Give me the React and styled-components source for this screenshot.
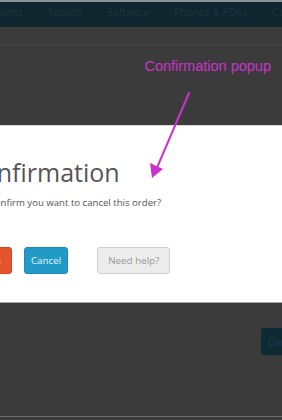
import React from "react";
import styled, { createGlobalStyle } from "styled-components";

const Global = createGlobalStyle`
  html, body { margin: 0; padding: 0; background: #3b3b3b; }
  body { font-family: "Open Sans", "Liberation Sans", sans-serif; overflow: hidden; }
`;

const Screen = styled.div`
  position: relative;
  width: 282px;
  height: 420px;
  overflow: hidden;
  background: #3b3b3b;
  display: flex;
  flex-direction: column;
`;

const TopRule = styled.div`
  height: 2px;
  background: #8c9397;
  flex: none;
`;

const NavBar = styled.nav`
  flex: none;
  height: 25px;
  box-sizing: border-box;
  padding-top: 3px;
  background: #10262f;
  display: flex;
  align-items: flex-start;
  gap: 25px;
  margin-left: -38px;
  white-space: nowrap;
`;

const NavItem = styled.span`
  font-size: 10px;
  line-height: 14px;
  color: #1c3540;
  letter-spacing: 0.1px;
`;

const Backdrop = styled.div`
  flex: none;
  height: ${(p) => p.$h}px;
  border-top: ${(p) => (p.$rule ? "1px solid #434343" : "none")};
  display: flex;
  flex-direction: column;
  align-items: ${(p) => p.$align || "stretch"};
`;

const Annotation = styled.div`
  font-family: "Liberation Sans", Arial, sans-serif;
  font-size: 14.5px;
  color: #cc33cc;
  padding: 13px 11px 0 0;
  line-height: 16px;
`;

const Modal = styled.section`
  flex: none;
  height: 176px;
  background: #ffffff;
  border-top: 1px solid #d9d9d9;
  border-bottom: 1px solid #a9a9a9;
  overflow: hidden;
`;

const ModalContent = styled.div`
  margin-left: -34px;
  padding-top: 30px;
  display: flex;
  flex-direction: column;
`;

const Title = styled.h1`
  margin: 0;
  font-weight: 400;
  font-size: 25px;
  line-height: 32px;
  color: #555555;
  white-space: nowrap;
`;

const Message = styled.p`
  margin: 8px 0 0 -10px;
  font-size: 9.6px;
  line-height: 14px;
  color: #555555;
  white-space: nowrap;
`;

const ButtonRow = styled.div`
  display: flex;
  align-items: center;
  margin-top: 37px;
  margin-left: -13px;
`;

const Button = styled.button`
  font-family: "Open Sans", "Liberation Sans", sans-serif;
  font-size: 9.8px;
  height: 27px;
  padding: 0 ${(p) => p.$pad || 6}px;
  border-radius: 3px;
  border: 1px solid ${(p) => p.$border};
  background: ${(p) => p.$bg};
  color: ${(p) => p.$fg};
  margin-left: ${(p) => p.$gap || 0}px;
  white-space: nowrap;
`;

const LowerBackdrop = styled.div`
  flex: 1;
  display: flex;
  flex-direction: column;
  align-items: flex-end;
  padding-top: 25px;
`;

const GhostButton = styled.div`
  width: 40px;
  height: 27px;
  margin-right: -19px;
  border-radius: 3px;
  background: #0f2a35;
  color: #1f3d49;
  font-size: 10px;
  display: flex;
  align-items: center;
  padding-left: 7px;
  box-sizing: border-box;
`;

const BottomRule = styled.div`
  height: 1px;
  background: #6c6c6c;
  margin-bottom: 3px;
  flex: none;
`;

const ArrowLayer = styled.svg`
  position: absolute;
  left: 0;
  top: 0;
  pointer-events: none;
`;

export default function App() {
  return (
    <>
      <Global />
      <Screen>
        <TopRule />
        <NavBar>
          <NavItem>Components</NavItem>
          <NavItem>Tablets</NavItem>
          <NavItem>Software</NavItem>
          <NavItem>Phones &amp; PDAs</NavItem>
          <NavItem>Cameras</NavItem>
        </NavBar>
        <Backdrop $h={17} />
        <Backdrop $h={80} $rule $align="flex-end">
          <Annotation>Confirmation popup</Annotation>
        </Backdrop>
        <Modal>
          <ModalContent>
            <Title>Confirmation</Title>
            <Message>Do you confirm you want to cancel this order?</Message>
            <ButtonRow>
              <Button $bg="#e4542f" $border="#d4461f" $fg="#ffffff" $pad={10}>Confirm</Button>
              <Button $bg="#229ac8" $border="#1f8bb5" $fg="#e6f4fa" $gap={12}>Cancel</Button>
              <Button $bg="#ececec" $border="#cfcfcf" $fg="#9a9a9a" $pad={10} $gap={29}>Need help?</Button>
            </ButtonRow>
          </ModalContent>
        </Modal>
        <LowerBackdrop>
          <GhostButton>Continue</GhostButton>
        </LowerBackdrop>
        <BottomRule />
        <ArrowLayer width="282" height="420" viewBox="0 0 282 420">
          <line x1="189" y1="93" x2="156" y2="170" stroke="#cc33cc" strokeWidth="2" strokeLinecap="round" />
          <polygon points="152,178 150,163 163,169" fill="#cc33cc" />
        </ArrowLayer>
      </Screen>
    </>
  );
}
